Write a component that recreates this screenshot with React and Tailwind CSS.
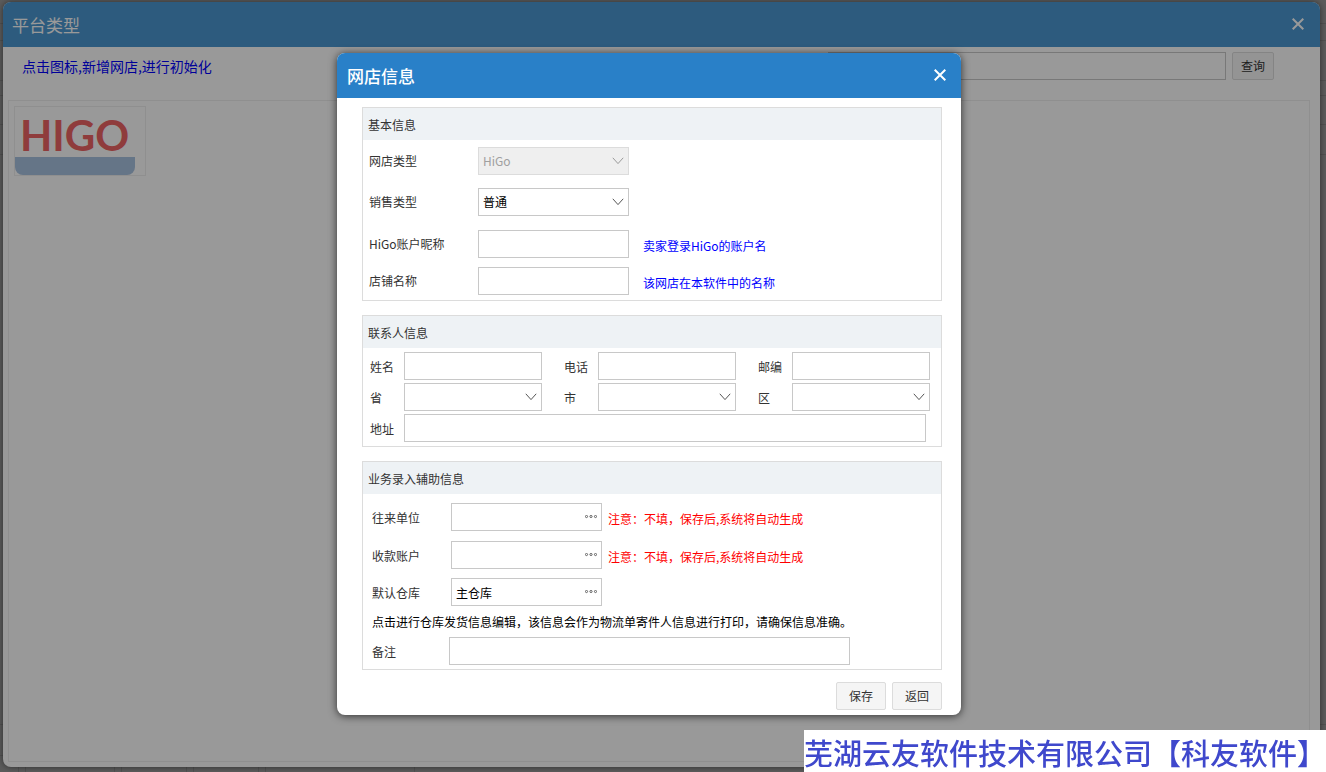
import React, { useState } from 'react';

const inputClass = 'h-7 border border-[#c8c8c8] bg-white px-1 text-xs text-black outline-none';

const CloseIcon = () => (
  <svg width="12" height="12" viewBox="0 0 12 12" fill="none" stroke="currentColor" strokeWidth="2">
    <path d="M0.7 0.7 L11.3 11.3 M11.3 0.7 L0.7 11.3" />
  </svg>
);

const Section = ({ title, children }) => (
  <section className="mb-[14px] border border-[#dcdcdc]">
    <h3 className="h-8 bg-[#eef2f5] px-[5px] leading-[34px]">{title}</h3>
    {children}
  </section>
);

const SelectBox = ({ id, className, options, ...props }) => (
  <div className={`relative ${className}`}>
    <select
      id={id}
      className={`${inputClass} w-full appearance-none disabled:border-[#dcdcdc] disabled:bg-[#efefef] disabled:text-[#a0a0a0] disabled:opacity-100`}
      {...props}
    >
      {options.map(o => <option key={o}>{o}</option>)}
    </select>
    <svg
      className={`pointer-events-none absolute top-[10px] right-[5px] ${props.disabled ? 'text-[#999999]' : 'text-[#555555]'}`}
      width="12" height="8" viewBox="0 0 12 8" fill="none" stroke="currentColor"
    >
      <path d="M0.8 0.8 L6 6.6 L11.2 0.8" />
    </svg>
  </div>
);

const LookupBox = ({ id, defaultValue }) => (
  <div className="relative w-[151px]">
    <input id={id} defaultValue={defaultValue} className={`${inputClass} w-full pr-6`} />
    <button type="button" aria-label="选择" className="absolute top-0 right-0 flex h-7 w-[22px] items-center justify-center">
      <svg width="12" height="4" viewBox="0 0 12 4" fill="none" stroke="#555555" strokeWidth="0.9">
        <circle cx="1.5" cy="1.5" r="1.1" />
        <circle cx="6" cy="1.5" r="1.1" />
        <circle cx="10.5" cy="1.5" r="1.1" />
      </svg>
    </button>
  </div>
);

const Row = ({ id, label, labelClass, className = '', children }) => (
  <div className={`flex items-center ${className}`}>
    <label htmlFor={id} className={`shrink-0 ${labelClass}`}>{label}</label>
    {children}
  </div>
);

// Grid page that sits behind both windows
const BackPage = () => (
  <div className="absolute inset-0 flex flex-col overflow-hidden bg-[#999999] text-xs text-[#333333]">
    <div className="h-6 border-b border-[#888888]"></div>
    <div className="h-[17px] border-b border-[#888888]"></div>
    <div className="h-10 border-b border-[#888888]"></div>
    <div className="h-[15px] border-b border-[#888888]"></div>
    <div className="h-[29px] border-b border-[#888888]"></div>
    <div className="h-[30px] border-b border-[#888888]"></div>
    <div className="flex-1 border-b border-[#888888]"></div>
    <div className="h-[31px] border-b border-[#888888]"></div>
    <div className="flex h-4 gap-[6px] pl-[18px]">
      <div className="border-l border-[#888888]"></div>
      <div className="w-[90px] border-x border-[#888888]"></div>
      <div className="w-[66px] border-x border-[#888888]"></div>
      <div className="w-[66px] border-x border-[#888888]"></div>
      <div className="w-[150px] border-x border-[#888888]"></div>
    </div>
  </div>
);

const PlatformWindow = () => (
  <div className="relative flex flex-1 flex-col rounded-lg bg-white shadow-[0_0_6px_rgba(0,0,0,0.5)]">
    <header className="flex h-[45px] items-center justify-between rounded-t-lg bg-[#4c98d2] pr-4 pl-[9px] text-white">
      <h1 className="text-[17px] leading-6">平台类型</h1>
      <button type="button" aria-label="关闭" className="pb-[2px]"><CloseIcon /></button>
    </header>
    <div className="flex items-center pt-[5px] pr-[46px] pl-[19px]">
      <p className="flex-1 text-sm leading-7 text-[#0000ff]">点击图标,新增网店,进行初始化</p>
      <input aria-label="网店名称" className={`${inputClass} w-[398px]`} />
      <button type="button" className="ml-[6px] h-7 w-[42px] rounded-xs border border-[#dddddd] bg-[#f7f7f7] text-xs text-[#333333]">
        查询
      </button>
    </div>
    <div className="mx-[5px] mt-5 mr-[10px] mb-[5px] flex-1 border border-[#eeeeee] p-[5px]">
      <button type="button" className="flex h-[70px] w-[132px] flex-col border border-[#eeeeee] text-left">
        <span className="h-[50px] pl-[5px] font-['Lato',sans-serif] text-[42px] leading-[56px] font-bold text-[#ee6464]">HIGO</span>
        <span className="h-[18px] w-[120px] rounded-b-lg bg-[#a9c3e1]"></span>
      </button>
    </div>
  </div>
);

const ContactSection = () => {
  const names = [['name', '姓名'], ['phone', '电话'], ['zip', '邮编']];
  const areas = [['province', '省'], ['city', '市'], ['district', '区']];

  return (
    <Section title="联系人信息">
      <div className="space-y-[3px] pt-1 pb-1 pl-[7px]">
        <div className="flex gap-[22px]">
          {names.map(([id, label]) => (
            <Row key={id} id={id} label={label} labelClass="w-[34px] pt-[2px]">
              <input id={id} className={`${inputClass} w-[138px]`} />
            </Row>
          ))}
        </div>
        <div className="flex gap-[22px]">
          {areas.map(([id, label]) => (
            <Row key={id} id={id} label={label} labelClass="w-[34px] pt-[2px]">
              <SelectBox id={id} className="w-[138px]" options={['']} />
            </Row>
          ))}
        </div>
        <Row id="address" label="地址" labelClass="w-[34px] pt-[2px]">
          <input id="address" className={`${inputClass} w-[522px]`} />
        </Row>
      </div>
    </Section>
  );
};

const ShopDialog = () => {
  const [saleType, setSaleType] = useState('普通');

  return (
    <div role="dialog" aria-label="网店信息" className="w-[624px] rounded-lg bg-white text-xs text-[#333333] shadow-[0_1px_8px_rgba(0,0,0,0.7)]">
      <header className="flex h-[45px] items-center justify-between rounded-t-lg bg-[#2980c8] pr-[15px] pl-[10px] text-white">
        <h2 className="text-[17px] leading-6 font-medium">网店信息</h2>
        <button type="button" aria-label="关闭" className="pb-[2px]"><CloseIcon /></button>
      </header>

      <form className="pt-[9px] pr-[19px] pb-[5px] pl-[25px]">
        <Section title="基本信息">
          <div className="pt-[7px] pb-[5px] pl-[6px]">
            <Row id="shopType" label="网店类型" labelClass="w-[109px]" className="mb-[13px]">
              <SelectBox id="shopType" className="w-[151px]" options={['HiGo']} disabled />
            </Row>
            <Row id="saleType" label="销售类型" labelClass="w-[109px]" className="mb-[14px]">
              <SelectBox
                id="saleType"
                className="w-[151px]"
                options={['普通', '代销']}
                value={saleType}
                onChange={e => setSaleType(e.target.value)}
              />
            </Row>
            <Row id="nick" label="HiGo账户昵称" labelClass="w-[109px]" className="mb-[9px]">
              <input id="nick" className={`${inputClass} w-[151px]`} />
              <span className="pt-[3px] pl-[14px] text-[#0000ff]">卖家登录HiGo的账户名</span>
            </Row>
            <Row id="shopName" label="店铺名称" labelClass="w-[109px]">
              <input id="shopName" className={`${inputClass} w-[151px]`} />
              <span className="pt-[3px] pl-[14px] text-[#0000ff]">该网店在本软件中的名称</span>
            </Row>
          </div>
        </Section>

        <ContactSection />

        <Section title="业务录入辅助信息">
          <div className="pt-[9px] pb-1 pl-[9px]">
            <Row id="partner" label="往来单位" labelClass="w-[79px] pt-[2px]" className="mb-[10px]">
              <LookupBox id="partner" />
              <span className="pt-1 pl-[6px] text-[#ff0000]">注意：不填，保存后,系统将自动生成</span>
            </Row>
            <Row id="account" label="收款账户" labelClass="w-[79px] pt-[2px]" className="mb-[9px]">
              <LookupBox id="account" />
              <span className="pt-1 pl-[6px] text-[#ff0000]">注意：不填，保存后,系统将自动生成</span>
            </Row>
            <Row id="warehouse" label="默认仓库" labelClass="w-[79px] pt-[2px]">
              <LookupBox id="warehouse" defaultValue="主仓库" />
            </Row>
            <p className="leading-[31px] text-black">点击进行仓库发货信息编辑，该信息会作为物流单寄件人信息进行打印，请确保信息准确。</p>
            <Row id="remark" label="备注" labelClass="w-[77px] pt-[2px]">
              <input id="remark" className={`${inputClass} w-[401px]`} />
            </Row>
          </div>
        </Section>

        <div className="-mt-[2px] flex justify-end gap-[6px]">
          <button type="button" className="h-7 w-[50px] rounded-xs border border-[#dcdcdc] bg-[#f5f5f5]">保存</button>
          <button type="button" className="h-7 w-[50px] rounded-xs border border-[#dcdcdc] bg-[#f5f5f5]">返回</button>
        </div>
      </form>
    </div>
  );
};

const App = () => (
  <div className="relative flex min-h-screen flex-col pt-[2px] pr-[6px] pb-[5px] pl-[3px] font-['Noto_Sans_CJK_SC',sans-serif]">
    <BackPage />
    <PlatformWindow />

    <div className="absolute inset-0 flex items-start justify-center bg-black/40 pt-[53px] pr-7">
      <ShopDialog />
    </div>

    <div className="fixed right-0 bottom-0 h-[42px] bg-white text-[29px] leading-[44px] font-medium whitespace-nowrap text-[#3f48cc]">
      芜湖云友软件技术有限公司【科友软件】
    </div>
  </div>
);

export default App;
